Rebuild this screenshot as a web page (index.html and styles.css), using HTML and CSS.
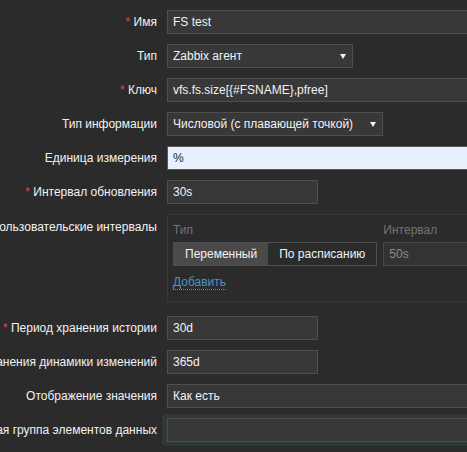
FILE: index.html
```html
<!DOCTYPE html>
<html lang="ru">
<head>
  <meta charset="UTF-8">
  <meta name="viewport" content="width=device-width, initial-scale=1.0">
  <title>Прототип элемента данных</title>
  <link rel="stylesheet" href="styles.css">
</head>
<body>
  <form class="form">
    <div class="row">
      <label class="label"><span class="req">*</span>&nbsp;Имя</label>
      <div class="field"><input class="text wide" type="text" value="FS test"></div>
    </div>
    <div class="row">
      <label class="label">Тип</label>
      <div class="field"><div class="select type">Zabbix агент</div></div>
    </div>
    <div class="row">
      <label class="label"><span class="req">*</span>&nbsp;Ключ</label>
      <div class="field"><input class="text wide" type="text" value="vfs.fs.size[{#FSNAME},pfree]"></div>
    </div>
    <div class="row">
      <label class="label">Тип информации</label>
      <div class="field"><div class="select info">Числовой (с плавающей точкой)</div></div>
    </div>
    <div class="row">
      <label class="label">Единица измерения</label>
      <div class="field"><input class="text wide filled" type="text" value="%"></div>
    </div>
    <div class="row">
      <label class="label"><span class="req">*</span>&nbsp;Интервал обновления</label>
      <div class="field"><input class="text short" type="text" value="30s"></div>
    </div>
    <div class="row row-box">
      <label class="label label-top">Пользовательские интервалы</label>
      <div class="field">
        <div class="intervals">
          <div class="head">Тип</div>
          <div class="head">Интервал</div>
          <div class="seg">
            <span class="seg-item active">Переменный</span>
            <span class="seg-item">По расписанию</span>
          </div>
          <input class="text disabled" type="text" value="50s" disabled>
          <div class="add-cell"><a class="link" href="#">Добавить</a></div>
        </div>
      </div>
    </div>
    <div class="row">
      <label class="label"><span class="req">*</span>&nbsp;Период хранения истории</label>
      <div class="field"><input class="text short" type="text" value="30d"></div>
    </div>
    <div class="row">
      <label class="label">Период хранения динамики изменений</label>
      <div class="field"><input class="text short" type="text" value="365d"></div>
    </div>
    <div class="row">
      <label class="label">Отображение значения</label>
      <div class="field"><div class="select wide">Как есть</div></div>
    </div>
    <div class="row">
      <label class="label">Новая группа элементов данных</label>
      <div class="field highlight"><input class="text wide" type="text" value=""></div>
    </div>
  </form>
</body>
</html>
```

FILE: styles.css
```css
html, body {
  margin: 0;
  overflow: hidden;
  background-color: #2b2b2b;
}
body {
  font-family: "Liberation Sans", Arial, sans-serif;
  font-size: 12px;
  color: #f2f2f2;
}
.form {
  display: flex;
  flex-direction: column;
  padding-top: 10px;
}
.row {
  display: flex;
  gap: 10px;
  margin-bottom: 10px;
}
.row-box {
  margin-bottom: 14px;
}
.label {
  flex: none;
  width: 157px;
  display: flex;
  justify-content: flex-end;
  white-space: nowrap;
  line-height: 24px;
}
.label-top {
  line-height: 14px;
  padding-top: 6px;
}
.req {
  color: #e04848;
}
.field {
  flex: none;
}
.text, .select {
  box-sizing: border-box;
  height: 24px;
  margin: 0;
  padding: 0 5px;
  font-family: inherit;
  font-size: 12px;
  color: #f2f2f2;
  background-color: #383838;
  border: 1px solid #4f4f4f;
  outline: none;
}
.select {
  position: relative;
  line-height: 22px;
  white-space: nowrap;
}
.select::after {
  content: "";
  position: absolute;
  right: 6px;
  top: 9px;
  border-left: 3.5px solid transparent;
  border-right: 3.5px solid transparent;
  border-top: 5px solid #f2f2f2;
}
.wide {
  width: 453px;
}
.short {
  width: 151px;
}
.type {
  width: 186px;
}
.info {
  width: 216px;
}
.filled {
  background-color: #e8f0fe;
  color: #1f1f1f;
  border-color: #5a5a5a;
}
.intervals {
  box-sizing: border-box;
  width: 453px;
  height: 88px;
  padding: 5px;
  border: 1px solid #383838;
  display: grid;
  grid-template-columns: auto 151px;
  grid-template-rows: 22px 24px 30px;
  column-gap: 6px;
  justify-content: start;
}
.head {
  color: #737373;
  line-height: 14px;
  padding-top: 3px;
}
.seg {
  display: flex;
  border: 1px solid #4f4f4f;
  background-color: #2b2b2b;
}
.seg-item {
  padding: 0 11px;
  line-height: 22px;
}
.seg-item.active {
  background-color: #4a4a4a;
}
.disabled {
  color: #8c8c8c;
  background-color: #333333;
  border-color: #474747;
}
.add-cell {
  grid-column: 1 / 3;
  padding-top: 9px;
}
.link {
  display: inline-block;
  line-height: 14px;
  color: #4796c4;
  text-decoration: none;
  border-bottom: 1px dotted #4796c4;
}
.highlight {
  margin: -4px 0 0 -5px;
  padding: 4px 5px;
  background-color: #2f3b32;
  border-radius: 3px;
}
```
